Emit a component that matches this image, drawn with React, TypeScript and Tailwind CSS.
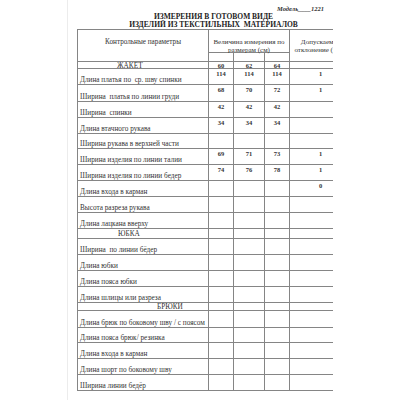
const line = "border-[#858585]";

type Row = {
  h: string;
  label: string;
  vals?: string[];
  tol?: string;
  section?: string; // padding-left class for section titles
};

const rows: Row[] = [
  { h: "h-[7px]", label: "ЖАКЕТ", section: "pl-[39px]", vals: ["60", "62", "64"] },
  { h: "h-[16px]", label: "Длина платья по  ср. шву спинки", vals: ["114", "114", "114"], tol: "1" },
  { h: "h-[17px]", label: "Ширина  платья по линии груди", vals: ["68", "70", "72"], tol: "1" },
  { h: "h-[16px]", label: "Ширина  спинки", vals: ["42", "42", "42"] },
  { h: "h-[16px]", label: "Длина втачного рукава", vals: ["34", "34", "34"] },
  { h: "h-[15px]", label: "Ширина рукава в верхней части" },
  { h: "h-[16px]", label: "Ширина изделия по линии талии", vals: ["69", "71", "73"], tol: "1" },
  { h: "h-[16px]", label: "Ширина изделия по линии бедер", vals: ["74", "76", "78"], tol: "1" },
  { h: "h-[16px]", label: "Длина входа в карман", tol: "0" },
  { h: "h-[16px]", label: "Высота разреза рукава" },
  { h: "h-[16px]", label: "Длина лацкана вверху" },
  { h: "h-[10px]", label: "ЮБКА", section: "pl-[40px]" },
  { h: "h-[16px]", label: "Ширина  по линии бёдер" },
  { h: "h-[16px]", label: "Длина юбки" },
  { h: "h-[16px]", label: "Длина пояса юбки" },
  { h: "h-[16px]", label: "Длина шлицы или разреза" },
  { h: "h-[8px]", label: "БРЮКИ", section: "pl-[79px]" },
  { h: "h-[17px]", label: "Длина брюк по боковому шву / с поясом" },
  { h: "h-[15px]", label: "Длина пояса брюк/ резинка" },
  { h: "h-[16px]", label: "Длина входа в карман" },
  { h: "h-[16px]", label: "Длина шорт по боковому шву" },
  { h: "h-[16px]", label: "Ширина линии бедёр" },
];

const sizeCols = ["w-[25px]", "w-[31px]", "w-[25px]"];

function TableRow({ row }: { row: Row }) {
  const sectionRow = !!row.section;
  return (
    <div className={`flex border-b ${line} ${row.h}`}>
      {sectionRow ? (
        <div className={`w-[131px] shrink-0 border-r ${line} flex items-center ${row.section} text-[7.3px] leading-[7px] whitespace-pre`}>
          {row.label}
        </div>
      ) : (
        <div className={`w-[131px] shrink-0 border-r ${line} flex items-end pl-[2px] text-[7.25px] leading-[8px] whitespace-pre overflow-hidden`}>
          {row.label}
        </div>
      )}
      {sizeCols.map((w, i) => (
        <div
          key={i}
          className={`${w} shrink-0 border-r ${line} text-center font-bold text-[6.5px] ${
            sectionRow ? "flex items-center justify-center leading-[7px]" : "pt-[1px] leading-[8px]"
          }`}
        >
          {row.vals?.[i]}
        </div>
      ))}
      <div className="w-[61px] shrink-0 text-center font-bold text-[6.5px] pt-[1px] leading-[8px]">{row.tol}</div>
    </div>
  );
}

export default function App() {
  return (
    <div className="w-[400px] h-[400px] bg-white overflow-hidden text-[#333] font-['Liberation_Serif',serif]">
      <div className="w-[333px] h-full overflow-hidden">
        <div className="ml-[67px] h-full border-l border-[#ececec] pl-[9px] pt-[5px]">
          <div className="w-[273px]">
            {/* Model line */}
            <div className="h-[8px] leading-[8px] pl-[200px] text-[6.5px] font-bold italic whitespace-pre">
              Модель____1221
            </div>

            {/* Title */}
            <div className="text-center font-bold text-[7.5px] leading-[7.5px] text-[#222]">
              <div>ИЗМЕРЕНИЯ В ГОТОВОМ ВИДЕ</div>
              <div className="whitespace-pre">ИЗДЕЛИЙ ИЗ ТЕКСТИЛЬНЫХ  МАТЕРИАЛОВ</div>
            </div>

            {/* Table */}
            <div className={`mt-[1px] border-t border-l ${line}`}>
              {/* Header */}
              <div className={`flex h-[32px] border-b ${line}`}>
                <div className={`w-[131px] shrink-0 border-r ${line} pt-[8px] text-center text-[7.2px] leading-[8px]`}>
                  Контрольные параметры
                </div>
                <div className="w-[81px] shrink-0 flex flex-col">
                  <div className={`h-[23px] border-b border-r ${line} pt-[8px] text-center text-[7px] leading-[8px]`}>
                    Величина измерения по
                    <br />
                    размерам (см)
                  </div>
                  <div className="flex flex-1">
                    {sizeCols.map((w, i) => (
                      <div key={i} className={`${w} shrink-0 border-r ${line}`} />
                    ))}
                  </div>
                </div>
                <div className="w-[61px] shrink-0 pt-[8px] text-center text-[7px] leading-[8px] whitespace-nowrap">
                  Допускаемое
                  <br />
                  отклонение (±см)
                </div>
              </div>

              {rows.map((r, i) => (
                <TableRow key={i} row={r} />
              ))}
            </div>
          </div>
        </div>
      </div>
    </div>
  );
}
